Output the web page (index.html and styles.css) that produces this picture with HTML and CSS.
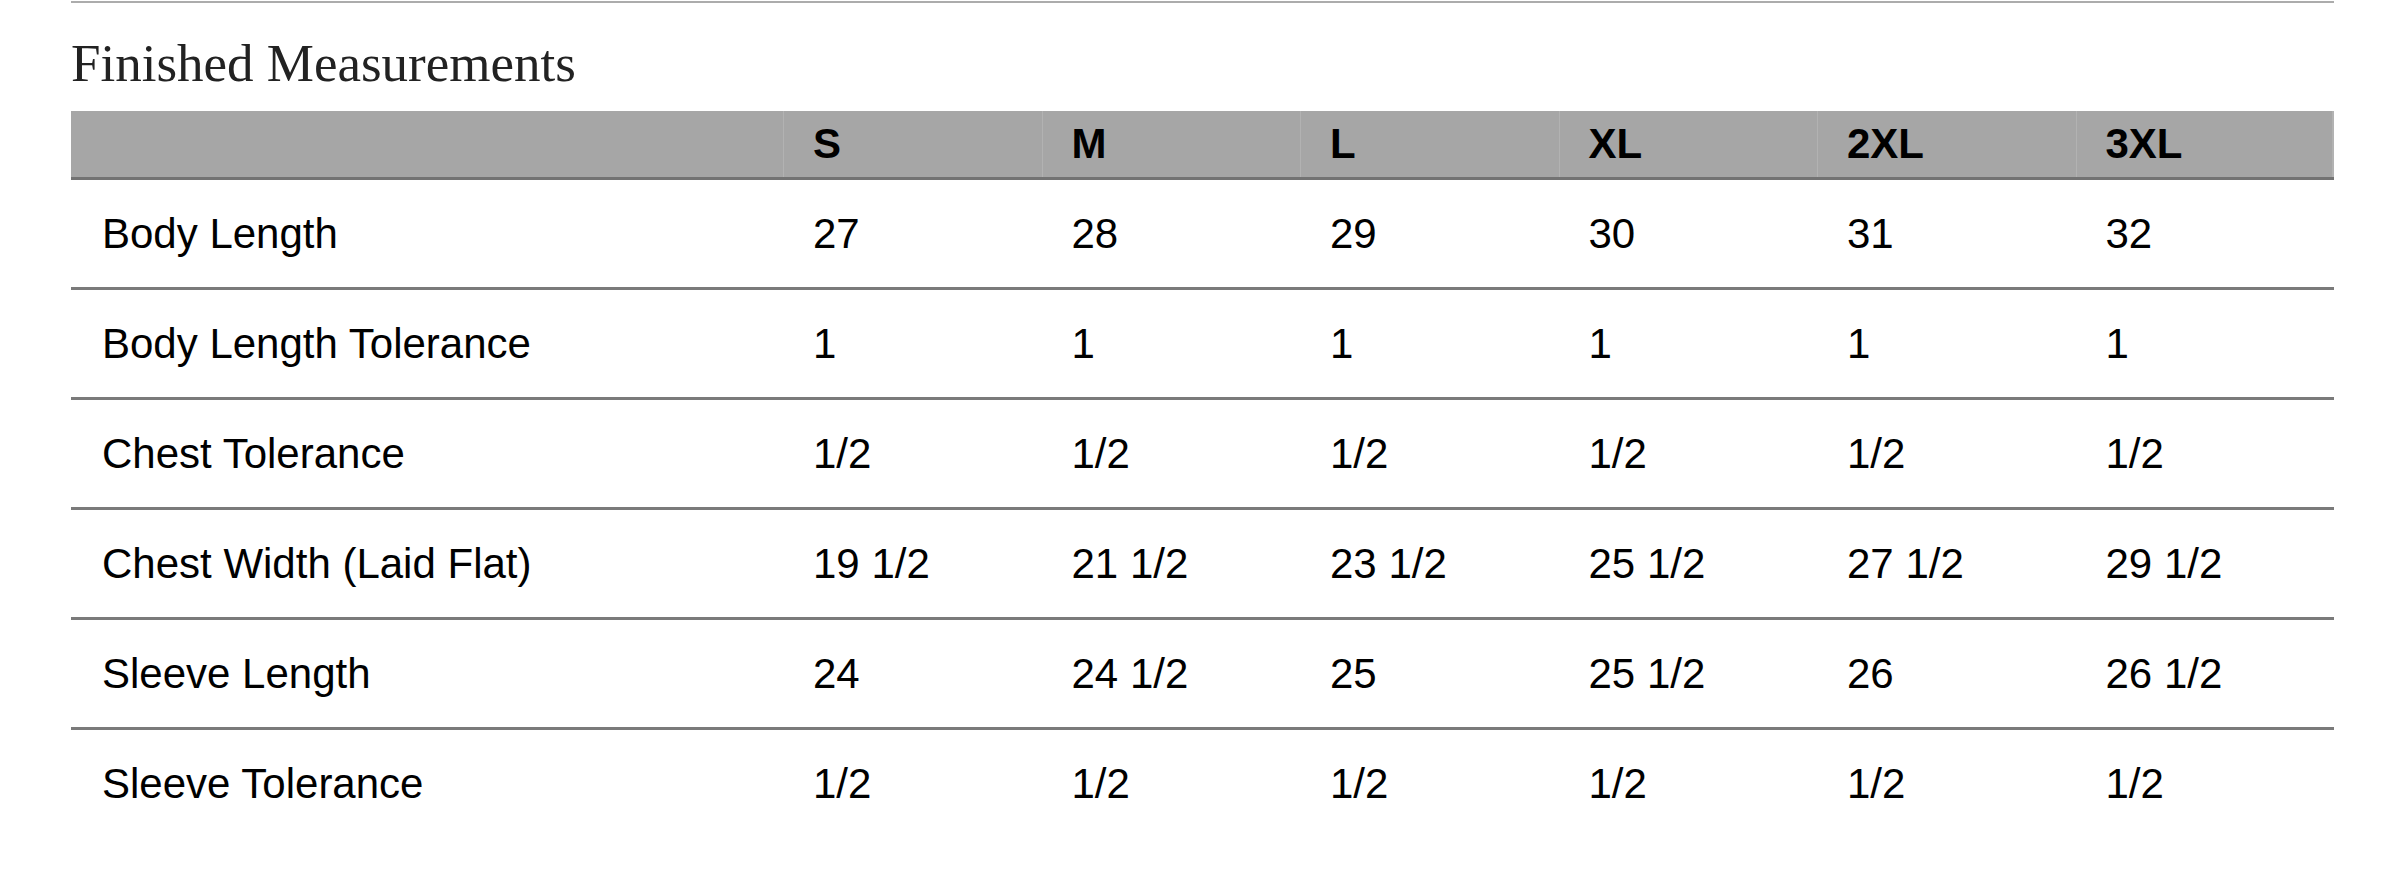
FILE: index.html
```html
<!DOCTYPE html>
<html lang="en">
<head>
<meta charset="utf-8">
<title>Finished Measurements</title>
<link rel="stylesheet" href="styles.css">
</head>
<body>
<div class="page">
  <div class="rule"></div>
  <h2 class="title">Finished Measurements</h2>
  <table class="sizes">
    <colgroup>
      <col class="col-label">
      <col class="col-size"><col class="col-size"><col class="col-size">
      <col class="col-size"><col class="col-size"><col class="col-size">
    </colgroup>
    <thead>
      <tr><th></th><th>S</th><th>M</th><th>L</th><th>XL</th><th>2XL</th><th>3XL</th></tr>
    </thead>
    <tbody>
      <tr><td>Body Length</td><td>27</td><td>28</td><td>29</td><td>30</td><td>31</td><td>32</td></tr>
      <tr><td>Body Length Tolerance</td><td>1</td><td>1</td><td>1</td><td>1</td><td>1</td><td>1</td></tr>
      <tr><td>Chest Tolerance</td><td>1/2</td><td>1/2</td><td>1/2</td><td>1/2</td><td>1/2</td><td>1/2</td></tr>
      <tr><td>Chest Width (Laid Flat)</td><td>19 1/2</td><td>21 1/2</td><td>23 1/2</td><td>25 1/2</td><td>27 1/2</td><td>29 1/2</td></tr>
      <tr><td>Sleeve Length</td><td>24</td><td>24 1/2</td><td>25</td><td>25 1/2</td><td>26</td><td>26 1/2</td></tr>
      <tr><td>Sleeve Tolerance</td><td>1/2</td><td>1/2</td><td>1/2</td><td>1/2</td><td>1/2</td><td>1/2</td></tr>
    </tbody>
  </table>
</div>
</body>
</html>
```

FILE: styles.css
```css
html, body {
  margin: 0;
  padding: 0;
  background: #ffffff;
}

.page {
  width: 2263px;
  margin-left: 71px;
  padding-top: 1px;
}

.rule {
  height: 2px;
  background: #acacac;
}

.title {
  margin: 34px 0 21px 0;
  font-family: "Liberation Serif", "Times New Roman", serif;
  font-weight: normal;
  font-size: 53px;
  line-height: 53px;
  color: #222222;
}

.sizes {
  width: 2263px;
  table-layout: fixed;
  border-collapse: separate;
  border-spacing: 0;
  font-family: "Liberation Sans", Arial, sans-serif;
  font-size: 42px;
  color: #000000;
}

.col-label {
  width: 712px;
}

.col-size {
  width: 258.5px;
}

.sizes th {
  background: #a6a6a6;
  font-weight: bold;
  text-align: left;
  line-height: 66px;
  padding: 0 0 0 30px;
  border-bottom: 3px solid #737373;
  white-space: nowrap;
}

.sizes th + th {
  box-shadow: inset 1px 0 0 #b2b2b2;
}

.sizes th:last-child {
  box-shadow: inset 1px 0 0 #b2b2b2, inset -2px 0 0 #b2b2b2;
}

.sizes td {
  line-height: 107px;
  padding: 0 0 0 30px;
  border-bottom: 3px solid #7a7a7a;
  white-space: nowrap;
}

.sizes td:first-child {
  padding-left: 31px;
}

.sizes tbody tr:last-child td {
  border-bottom: none;
}
```
